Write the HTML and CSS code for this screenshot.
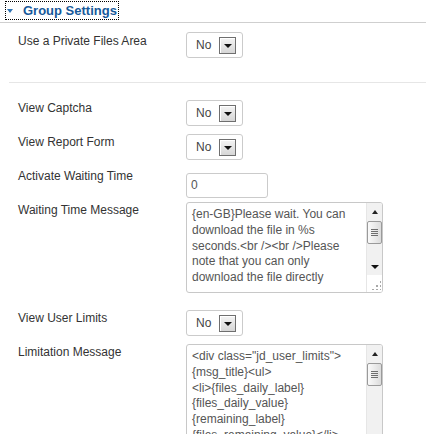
FILE: index.html
```html
<!DOCTYPE html>
<html>
<head>
<meta charset="utf-8">
<title>Group Settings</title>
<link rel="stylesheet" href="styles.css">
</head>
<body>
<div class="panel-header">
  <a class="toggler"><span class="caret"></span>Group Settings</a>
</div>

<div class="row row-first">
  <div class="label">Use a Private Files Area</div>
  <div class="select"><span>No</span><span class="select-btn"><span class="arrow-down"></span></span></div>
</div>

<div class="separator"></div>

<div class="row row-spaced">
  <div class="label">View Captcha</div>
  <div class="select"><span>No</span><span class="select-btn"><span class="arrow-down"></span></span></div>
</div>

<div class="row">
  <div class="label">View Report Form</div>
  <div class="select"><span>No</span><span class="select-btn"><span class="arrow-down"></span></span></div>
</div>

<div class="row">
  <div class="label">Activate Waiting Time</div>
  <div class="input">0</div>
</div>

<div class="row row-tight">
  <div class="label">Waiting Time Message</div>
  <div class="textarea">
    <div class="ta-text">
      <div>{en-GB}Please wait. You can</div>
      <div>download the file in %s</div>
      <div>seconds.&lt;br /&gt;&lt;br /&gt;Please</div>
      <div>note that you can only</div>
      <div>download the file directly</div>
    </div>
    <div class="scroll">
      <div class="sb-up"><span class="arrow-up"></span></div>
      <div class="sb-thumb"><span class="grip"></span></div>
      <div class="sb-track"></div>
      <div class="sb-down"><span class="arrow-down"></span></div>
      <div class="sb-corner"><span class="dots"></span></div>
    </div>
  </div>
</div>

<div class="row row-spaced">
  <div class="label">View User Limits</div>
  <div class="select"><span>No</span><span class="select-btn"><span class="arrow-down"></span></span></div>
</div>

<div class="row">
  <div class="label">Limitation Message</div>
  <div class="textarea textarea-tall">
    <div class="ta-text">
      <div>&lt;div class="jd_user_limits"&gt;</div>
      <div>{msg_title}&lt;ul&gt;</div>
      <div>&lt;li&gt;{files_daily_label}</div>
      <div>{files_daily_value}</div>
      <div>{remaining_label}</div>
      <div>{files_remaining_value}&lt;/li&gt;</div>
      <div>&lt;/ul&gt;&lt;/div&gt;</div>
    </div>
    <div class="scroll">
      <div class="sb-up"><span class="arrow-up"></span></div>
      <div class="sb-thumb"><span class="grip"></span></div>
      <div class="sb-track"></div>
      <div class="sb-down"><span class="arrow-down"></span></div>
      <div class="sb-corner"><span class="dots"></span></div>
    </div>
  </div>
</div>
</body>
</html>
```

FILE: styles.css
```css
html {
  overflow: hidden;
}

body {
  margin: 0;
  background: #fff;
  font-family: "Liberation Sans", Arial, sans-serif;
  font-size: 12px;
  color: #333;
}

.panel-header {
  height: 22px;
  border-bottom: 1px solid #cfcfcf;
}

.toggler {
  display: inline-flex;
  align-items: center;
  box-sizing: border-box;
  height: 19px;
  margin: 1px 0 0 5px;
  padding-right: 1px;
  border: 1px dotted #000;
  font-size: 13px;
  font-weight: bold;
  line-height: 17px;
  color: #17599a;
  text-decoration: none;
}

.caret {
  width: 0;
  height: 0;
  margin: 0 10px 0 1px;
  border-left: 3px solid transparent;
  border-right: 3px solid transparent;
  border-top: 4px solid #2f74b5;
}

.row {
  display: flex;
  align-items: flex-start;
  padding-left: 18px;
  margin-top: 8px;
}

.row-first {
  margin-top: 9px;
}

.row-first .label {
  padding-top: 2px;
}

.row-spaced {
  margin-top: 17px;
}

.row-tight {
  margin-top: 4px;
}

.label {
  width: 168px;
  flex: none;
  padding-top: 1px;
  line-height: 14px;
  color: #333;
}

.separator {
  margin: 24px 0 0 9px;
  border-top: 1px solid #e6e6e6;
}

.select {
  display: flex;
  align-items: center;
  justify-content: space-between;
  box-sizing: border-box;
  width: 57px;
  height: 26px;
  padding: 0 6px 0 9px;
  border: 1px solid #cbcbcb;
  border-radius: 3px;
  color: #444;
  line-height: 14px;
}

.select-btn {
  display: flex;
  align-items: center;
  justify-content: center;
  box-sizing: border-box;
  width: 17px;
  height: 17px;
  border: 1px solid #6f6f6f;
  background: linear-gradient(#f4f4f4, #d6d6d6);
  box-shadow: inset 1px 1px 0 #fff;
}

.arrow-down {
  width: 0;
  height: 0;
  border-left: 4px solid transparent;
  border-right: 4px solid transparent;
  border-top: 4px solid #111;
  margin-top: 1px;
}

.arrow-up {
  width: 0;
  height: 0;
  border-left: 3.5px solid transparent;
  border-right: 3.5px solid transparent;
  border-bottom: 4px solid #222;
}

.input {
  box-sizing: border-box;
  width: 82px;
  height: 25px;
  margin-top: 5px;
  padding-left: 4px;
  border: 1px solid #cbcbcb;
  border-radius: 3px;
  line-height: 23px;
  color: #555;
}

.textarea {
  display: flex;
  box-sizing: border-box;
  width: 197px;
  height: 91px;
  border: 1px solid #c8c8c8;
  border-radius: 3px;
  overflow: hidden;
}

.textarea-tall {
  height: 130px;
}

.ta-text {
  flex: 1;
  min-width: 0;
  padding: 4px 5px 0;
  overflow: hidden;
  white-space: nowrap;
  line-height: 15.75px;
  color: #555;
}

.scroll {
  display: flex;
  flex-direction: column;
  flex: none;
  width: 16px;
  background: #f1f1f1;
  border-left: 1px solid #e6e6e6;
  box-sizing: border-box;
}

.sb-up,
.sb-down {
  display: flex;
  align-items: center;
  justify-content: center;
  flex: none;
}

.sb-up {
  height: 18px;
}

.sb-down {
  height: 17px;
}

.sb-thumb {
  display: flex;
  align-items: center;
  justify-content: center;
  flex: none;
  box-sizing: border-box;
  height: 23px;
  border: 1px solid #9a9a9a;
  border-radius: 2px;
  background: linear-gradient(90deg, #fafafa, #dcdcdc);
}

.grip {
  width: 7px;
  height: 7px;
  background: repeating-linear-gradient(#6e6e6e 0 1px, transparent 1px 2px);
}

.sb-track {
  flex: 1;
}

.sb-corner {
  display: flex;
  align-items: flex-end;
  justify-content: flex-end;
  flex: none;
  height: 17px;
  background: #fff;
}

.dots {
  width: 10px;
  height: 10px;
  margin: 0 1px 2px 0;
  background:
    radial-gradient(circle, #a8a8a8 1px, transparent 1.3px) 0 0 / 4px 4px;
  clip-path: polygon(100% 0, 100% 100%, 0 100%);
}
```
